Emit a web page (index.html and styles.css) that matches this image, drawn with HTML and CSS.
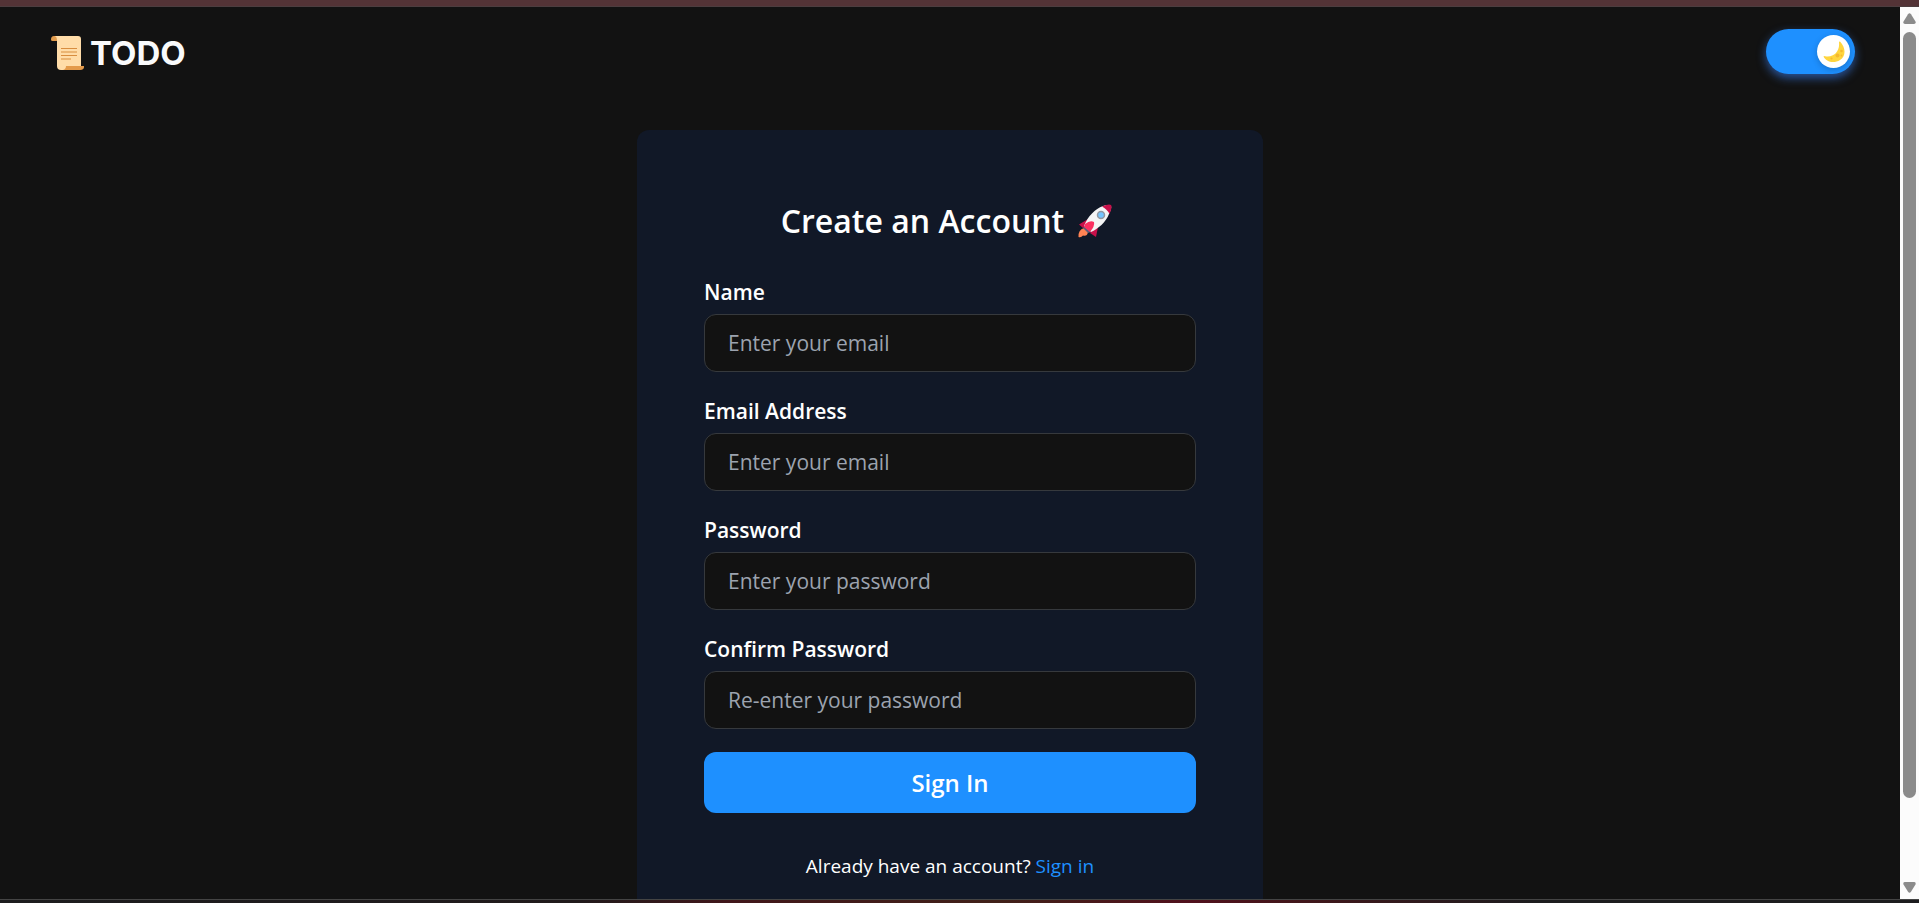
FILE: index.html
```html
<!DOCTYPE html>
<html lang="en">
<head>
<meta charset="utf-8">
<meta name="viewport" content="width=device-width, initial-scale=1">
<title>TODO - Create an Account</title>
<link rel="stylesheet" href="styles.css">
</head>
<body>
<div class="window">
  <div class="edge-top"></div>
  <div class="viewport">
    <div class="page">
      <header class="header">
        <div class="brand">
          <svg class="brand-icon" viewBox="0 0 34 34" aria-hidden="true">
            <path fill="#e09a4c" d="M3 0H9V5H1.500Q0 5 0 3.500Q0 0 3 0Z"/>
            <path fill="#ffdca8" d="M4 0H27Q30 0 30 3V31L27 34H10Q6 34 6 30V4Q6 1 4 0Z"/>
            <path fill="#e39a4b" d="M15 30H33Q33.500 34 29 34H12Q15 33 15 30Z"/>
            <path stroke="#d88d3f" stroke-width="1.100" d="M10 12.500H26M10 16H26M10 19.500H26M10 23H20"/>
          </svg>
          <span class="brand-name">TODO</span>
        </div>
        <button class="toggle" type="button" aria-label="Switch theme" aria-pressed="true">
          <span class="knob">
            <svg class="moon" viewBox="0 0 22 22" aria-hidden="true">
              <path fill="#ffd53e" d="M17 0.500C23 7 23 15 17 19C11 23 3 21 0.500 15.500Q1 14.500 2 15.200C10 17 17 11 16 1.500Q16 0.300 17 0.500Z"/>
              <g fill="#f5b92e"><circle cx="14.500" cy="14.500" r="2"/><circle cx="18.500" cy="10" r="1.300"/><circle cx="8.500" cy="17.500" r="1.100"/><circle cx="18.500" cy="14.500" r="0.900"/></g>
            </svg>
          </span>
        </button>
      </header>
      <main class="card">
        <h1 class="title">Create an Account
          <svg class="rocket" viewBox="0 0 34 34" aria-hidden="true">
            <path fill="#ff8354" d="M6 24Q0 26 0.500 33Q3 34 5 31.500Q9 33 10 28Z"/>
            <path fill="#c8104a" d="M10 15L1 20.500L5 24L13 17ZM20 23L18 33L12 29L17 21Z"/>
            <path fill="#5b5c78" d="M5 24L10 29L13 28L7 21Z"/>
            <path fill="#f4f4f5" d="M25 2Q31 0 33 2Q34 4 31 10C28 18 20 25 13 28L6 22C10 12 17 5 25 2Z"/>
            <path fill="#c8104a" d="M24 2.500Q31 -0.500 33 1Q34.500 3 31.500 10Q29 5 24 2.500Z"/>
            <path fill="#fb2f60" d="M7 20Q12 16 16 18Q17 22 12 28L6 23Z"/>
            <circle cx="23" cy="11" r="3.500" fill="#75c5ff" stroke="#9298a2" stroke-width="1.500"/>
          </svg>
        </h1>
        <form class="form">
          <div class="field">
            <label for="name">Name</label>
            <input id="name" type="text" placeholder="Enter your email">
          </div>
          <div class="field">
            <label for="email">Email Address</label>
            <input id="email" type="email" placeholder="Enter your email">
          </div>
          <div class="field">
            <label for="password">Password</label>
            <input id="password" type="password" placeholder="Enter your password">
          </div>
          <div class="field">
            <label for="confirm">Confirm Password</label>
            <input id="confirm" type="password" placeholder="Re-enter your password">
          </div>
          <button class="submit" type="submit">Sign In</button>
        </form>
        <p class="alt">Already have an account? <a href="#signin">Sign in</a></p>
      </main>
    </div>
    <div class="scrollbar" aria-hidden="true">
      <svg class="arrow" viewBox="0 0 13 11"><path d="M5 1.200Q6.500 -0.800 8 1.200L12.500 8.500Q13.300 11 11 11H2Q-0.300 11 0.500 8.500Z"/></svg>
      <div class="track"><div class="thumb"></div></div>
      <svg class="arrow" viewBox="0 0 13 11"><path d="M5 9.800Q6.500 11.800 8 9.800L12.500 2.500Q13.300 0 11 0H2Q-0.300 0 0.500 2.500Z"/></svg>
    </div>
  </div>
  <div class="edge-bottom"></div>
</div>
</body>
</html>
```
FILE: styles.css
```css
* {
  box-sizing: border-box;
}

body {
  margin: 0;
  background: #121212;
  color: #fff;
  font-family: "Segoe UI", "Open Sans", sans-serif;
}

.window {
  display: flex;
  flex-direction: column;
  height: 100vh;
}

.edge-top {
  flex: none;
  height: 7px;
  background: #533336;
  border-bottom: 1px solid #4c3d3f;
}

.edge-bottom {
  flex: none;
  height: 4px;
  border-top: 1px solid #444;
  background: linear-gradient(90deg, #1c1c1e 0%, #201a1b 30%, #40161a 38%, #402018 52%, #50101c 62%, #40161a 68%, #1c1c1e 80%);
}

.viewport {
  flex: 1;
  min-height: 0;
  display: flex;
}

.page {
  flex: 1;
  overflow: hidden;
}

.header {
  display: flex;
  justify-content: space-between;
  align-items: center;
  height: 89px;
  padding: 0 45px 0 51px;
}

.brand {
  display: flex;
  align-items: center;
  gap: 5px;
  padding-top: 3px;
}

.brand-icon {
  width: 34px;
  height: 34px;
}

.brand-name {
  font: 700 33px/44px Inter, sans-serif;
  color: #f9fafb;
}

.toggle {
  display: flex;
  justify-content: flex-end;
  align-items: center;
  width: 89px;
  height: 45px;
  padding: 0 5px;
  border: 0;
  border-radius: 23px;
  background: #1e90ff;
  box-shadow: 0 4px 10px rgba(59, 130, 246, 0.6);
}

.knob {
  display: flex;
  align-items: center;
  justify-content: center;
  width: 33px;
  height: 33px;
  border-radius: 50%;
  background: #fff;
  box-shadow: 0 2px 6px rgba(0, 0, 0, 0.2);
}

.moon {
  width: 22px;
  height: 22px;
}

.card {
  width: 626px;
  max-width: 100%;
  margin: 34px auto 0;
  padding: 67px;
  border-radius: 12px;
  background: #111827;
}

.title {
  display: flex;
  justify-content: center;
  align-items: center;
  gap: 14px;
  margin: 0 0 31px;
  padding-right: 7px;
  font-size: 32px;
  line-height: 48px;
  font-weight: 600;
}

.rocket {
  width: 34px;
  height: 34px;
}

.form {
  display: flex;
  flex-direction: column;
  gap: 23px;
}

.field {
  display: flex;
  flex-direction: column;
  gap: 6px;
}

.field label {
  font-size: 21px;
  line-height: 32px;
  font-weight: 600;
}

.field input {
  width: 100%;
  height: 58px;
  padding: 0 23px;
  border: 1px solid #36393d;
  border-radius: 12px;
  background: #121212;
  color: #fff;
  font: inherit;
  font-size: 21px;
}

.field input::placeholder {
  color: #9ca3af;
  opacity: 1;
}

.submit {
  height: 61px;
  border: 0;
  border-radius: 12px;
  background: #1e90ff;
  color: #fff;
  font: inherit;
  font-size: 24px;
  font-weight: 600;
}

.alt {
  margin: 38px 0 0;
  text-align: center;
  font-size: 19px;
  line-height: 30px;
}

.alt a {
  color: #1e90ff;
  text-decoration: none;
}

.scrollbar {
  flex: none;
  display: flex;
  flex-direction: column;
  align-items: center;
  gap: 8px;
  width: 19px;
  padding: 6px 0;
  background: #fcfcfc;
}

.arrow {
  width: 13px;
  height: 11px;
  fill: #8b8b8b;
}

.track {
  flex: 1;
  width: 13px;
}

.thumb {
  height: 91%;
  border-radius: 7px;
  background: #8b8b8b;
}
```
